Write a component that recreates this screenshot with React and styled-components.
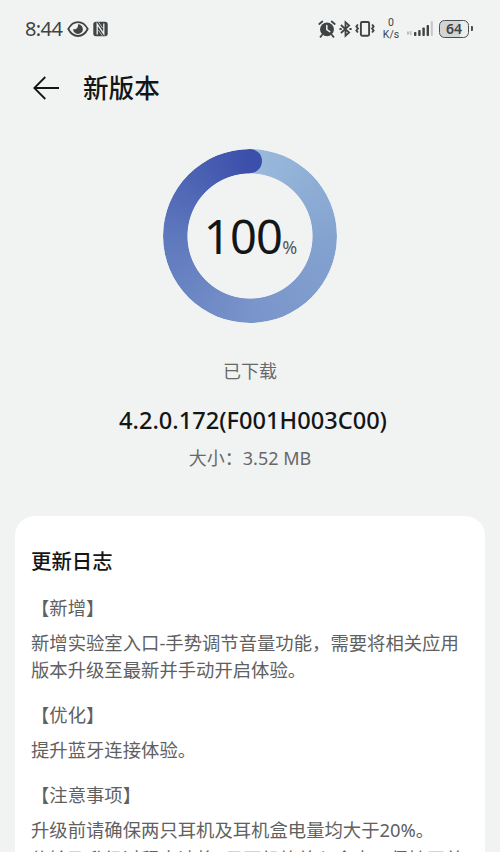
import styled, { createGlobalStyle } from "styled-components"

const GlobalStyle = createGlobalStyle`
  * {
    box-sizing: border-box;
  }
  body {
    margin: 0;
    background: #f1f3f3;
    overflow: hidden;
  }
`

const Screen = styled.div`
  width: 500px;
  height: 852px;
  overflow: hidden;
  display: flex;
  flex-direction: column;
  background: #f1f3f3;
  color: #141616;
  font-family: "Noto Sans", "Noto Sans CJK SC", sans-serif;
`

const StatusBar = styled.div`
  height: 57px;
  padding: 0 27px 0 25px;
  display: flex;
  align-items: center;
  justify-content: space-between;
  flex-shrink: 0;
  color: #3f4343;
`

const StatusGroup = styled.div`
  display: flex;
  align-items: center;
  gap: ${(p) => p.$gap}px;

  svg {
    flex-shrink: 0;
  }
`

const Clock = styled.span`
  width: 38px;
  font-size: 20px;
  line-height: 24px;
  letter-spacing: -0.6px;
  white-space: nowrap;
`

const Speed = styled.div`
  width: 18px;
  margin: 0 3px 0 4px;
  font-family: Roboto, sans-serif;
  font-size: 10.5px;
  line-height: 12px;
  text-align: center;
`

const Header = styled.header`
  height: 62px;
  padding-left: 32px;
  display: flex;
  align-items: center;
  gap: 23px;
  flex-shrink: 0;
`

const Title = styled.h1`
  margin: -2px 0 0;
  font-size: 25.6px;
  line-height: 38px;
  font-weight: 500;
  font-family: "Noto Sans CJK SC", sans-serif;
`

const Progress = styled.div`
  width: 174px;
  height: 174px;
  margin: 30px auto 0;
  display: grid;
  place-items: center;
  flex-shrink: 0;

  > * {
    grid-area: 1 / 1;
  }
`

const Ring = styled.div`
  width: 174px;
  height: 174px;
  border-radius: 50%;
  background: conic-gradient(#9bbbdc, #84a3d0 25%, #7994ca 50%, #5e78bd 75%, #3b4fab);
  mask: radial-gradient(circle, transparent 62.2px, #000 63px);
`

const RingCap = styled.div`
  width: 13px;
  height: 24.4px;
  z-index: 1;
  align-self: start;
  justify-self: start;
  margin-left: 86px;
  border-radius: 0 12.2px 12.2px 0;
  background: #3b4fab;
`

const Percent = styled.div`
  display: flex;
  align-items: baseline;
  margin-top: 11px;
  padding-left: 1px;
  font-size: 47px;
  line-height: 60px;
  letter-spacing: -0.7px;

  small {
    font-size: 18px;
    letter-spacing: 0;
    color: #555858;
  }
`

const Info = styled.section`
  display: flex;
  flex-direction: column;
  align-items: center;
  flex-shrink: 0;
`

const Muted = styled.p`
  margin: ${(p) => p.$top}px 0 0;
  font-size: 18px;
  line-height: 28px;
  color: #666969;
`

const Version = styled.h2`
  margin: 19px 0 0;
  padding-left: 6px;
  font-size: 23.6px;
  line-height: 32px;
  font-weight: 500;
  white-space: nowrap;
`

const Card = styled.main`
  width: 470px;
  height: 440px;
  margin: 44px 0 0 15px;
  padding: 29px 16px 0;
  border-radius: 20px;
  background: #fff;
  flex-shrink: 0;
`

const CardTitle = styled.h3`
  margin: 0 0 17px;
  font-size: 20.4px;
  line-height: 32px;
  font-weight: 500;
`

const Entry = styled.section`
  margin-bottom: 18px;
  font-size: 18.35px;
  line-height: 27px;
  color: #5f6161;
  white-space: nowrap;
`

const EntryTitle = styled.h4`
  margin: 0 0 8px;
  font-size: inherit;
  font-weight: 400;
`

const EntryText = styled.p`
  margin: 0 0 ${(p) => p.$gap || 0}px;
`

const log = [
  { title: "【新增】", lines: ["新增实验室入口-手势调节音量功能，需要将相关应用", "版本升级至最新并手动开启体验。"] },
  { title: "【优化】", lines: ["提升蓝牙连接体验。"] },
  {
    title: "【注意事项】",
    gap: 2,
    lines: ["升级前请确保两只耳机及耳机盒电量均大于20%。", "传输及升级过程中请将2只耳机均放入盒内，保持开盖"],
  },
]

const EyeIcon = () => (
  <svg width="22" height="18" viewBox="0 0 22 18" fill="none" stroke="currentColor">
    <path d="M1.3 9C6-.3 16-.3 20.7 9 16 18.3 6 18.3 1.3 9Z" strokeWidth="1.8" />
    <path d="M11 4.2A4.9 4.9 0 1 1 6.1 9c2.7 1 5.3-1.2 4.9-4.8Z" fill="currentColor" stroke="none" />
  </svg>
)

const NfcIcon = () => (
  <svg width="15" height="16" viewBox="0 0 15 16" fill="none">
    <rect x=".3" y=".8" width="14.4" height="14.4" rx="2.6" fill="currentColor" />
    <path d="M4.2 13.6V3.2l6.6 9.6V2.4" stroke="#f1f3f3" strokeWidth="1.3" />
    <path d="M5.6 1.2 9.6 7M5.4 9l4 5.8" stroke="#f1f3f3" strokeWidth=".7" />
  </svg>
)

const AlarmIcon = () => (
  <svg width="18" height="18" viewBox="0 0 18 18" fill="none" strokeLinecap="round">
    <circle cx="9" cy="9.4" r="6.9" fill="currentColor" />
    <path d="m1.3 4 3-2.5M16.7 4l-3-2.5M4 15l-1.5 1.8M14 15l1.5 1.8" stroke="currentColor" strokeWidth="1.8" />
    <path d="M8.8 5.4v4.3l3 2" stroke="#f1f3f3" strokeWidth="1.5" />
  </svg>
)

const BluetoothIcon = () => (
  <svg width="13" height="18" viewBox="0 0 13 18" fill="none" stroke="currentColor" strokeWidth="1.8">
    <path d="m1.9 5 8.2 7.5-3.6 3.3V2.2l3.6 3.3L1.9 13" />
    <path d="M.5 9h2.2M10.4 9h2.2" />
  </svg>
)

const VibrateIcon = () => (
  <svg width="20" height="18" viewBox="0 0 20 18" fill="none" stroke="currentColor" strokeWidth="1.9">
    <rect x="5.9" y="2" width="8.2" height="13.8" rx="1.2" />
    <path d="m2.9 4.5-1.5 2 1.5 2-1.5 2 1.5 2M17.1 4.5l1.5 2-1.5 2 1.5 2-1.5 2" />
  </svg>
)

const SignalIcon = () => (
  <svg width="28" height="18" viewBox="0 0 28 18" fill="currentColor">
    <path d="M1 11.5h2.2v3H1zM4 11h1.5v4H4z" opacity=".3" />
    <rect x="8" y="12" width="2.4" height="4" rx=".8" />
    <rect x="12.2" y="10" width="2.4" height="6" rx=".8" />
    <rect x="16.4" y="7.5" width="2.4" height="8.5" rx=".8" />
    <rect x="20.6" y="5" width="2.4" height="11" rx=".8" />
    <rect x="24.8" y="1" width="2" height="15" rx=".8" opacity=".25" />
  </svg>
)

const Battery = styled.div`
  width: 30px;
  height: 18px;
  margin-left: 2px;
  border: 1.5px solid #4a4e4e;
  border-radius: 5.5px;
  background: linear-gradient(90deg, #d3d5d5 72%, #eceeee 72%);
  font-size: 14px;
  font-weight: 600;
  line-height: 15px;
  text-align: center;
`

const BatteryTip = styled.div`
  width: 2px;
  height: 5px;
  margin-left: -1px;
  border-radius: 0 1px 1px 0;
  background: #4a4e4e;
`

const BackIcon = () => (
  <svg width="28" height="26" viewBox="0 0 28 26" fill="none" stroke="currentColor" strokeWidth="1.8">
    <path d="M27 13H2.5M13.3 2 2.3 13l11 11" />
  </svg>
)

export default function App() {
  return (
    <>
      <GlobalStyle />
      <Screen>
        <StatusBar>
          <StatusGroup $gap={4}>
            <Clock>8:44</Clock>
            <EyeIcon />
            <NfcIcon />
          </StatusGroup>
          <StatusGroup $gap={3}>
            <AlarmIcon />
            <BluetoothIcon />
            <VibrateIcon />
            <Speed>
              <div>0</div>
              <div>K/s</div>
            </Speed>
            <SignalIcon />
            <Battery>64</Battery>
            <BatteryTip />
          </StatusGroup>
        </StatusBar>

        <Header>
          <BackIcon />
          <Title>新版本</Title>
        </Header>

        <Progress>
          <Ring />
          <RingCap />
          <Percent>
            100<small>%</small>
          </Percent>
        </Progress>

        <Info>
          <Muted $top={34}>已下载</Muted>
          <Version>4.2.0.172(F001H003C00)</Version>
          <Muted $top={8}>大小：3.52 MB</Muted>
        </Info>

        <Card>
          <CardTitle>更新日志</CardTitle>
          {log.map((entry) => (
            <Entry key={entry.title}>
              <EntryTitle>{entry.title}</EntryTitle>
              {entry.lines.map((line) => (
                <EntryText key={line} $gap={entry.gap}>
                  {line}
                </EntryText>
              ))}
            </Entry>
          ))}
        </Card>
      </Screen>
    </>
  )
}
